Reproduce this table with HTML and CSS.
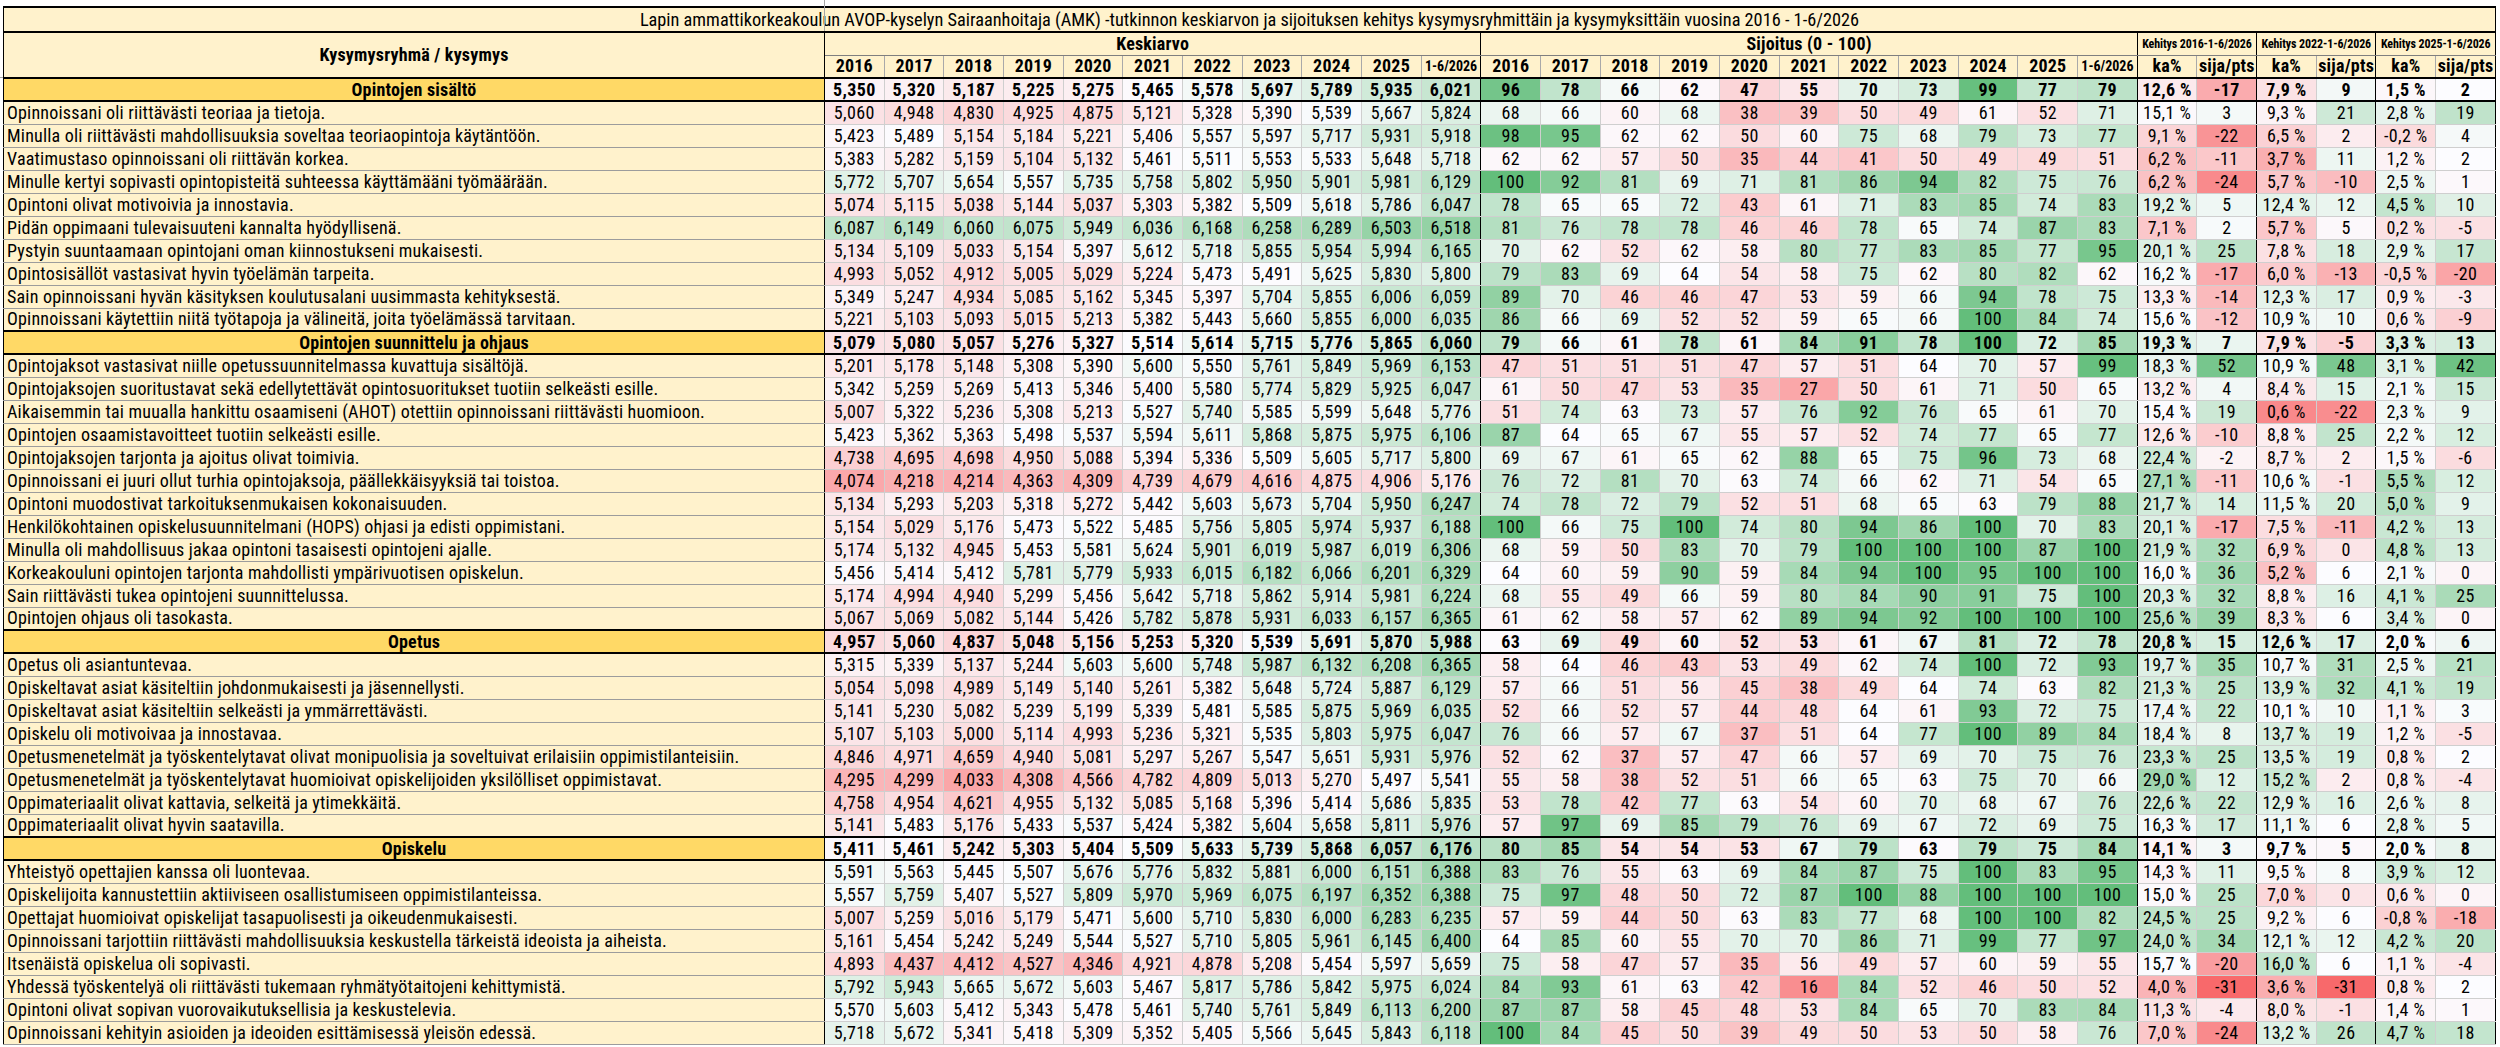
FILE: index.html
```html
<!DOCTYPE html>
<html lang="fi">
<head>
<meta charset="utf-8">
<title>AVOP Sairaanhoitaja (AMK)</title>
<link rel="stylesheet" href="styles.css">
</head>
<body>
<div class="freeze-v"></div>
<div class="freeze-h"></div>
<table class="sheet">
<colgroup><col class="qcol"><col span="28"></colgroup>
<thead>
<tr class="t"><th colspan="29" class="title">Lapin ammattikorkeakoulun AVOP-kyselyn Sairaanhoitaja (AMK) -tutkinnon keskiarvon ja sijoituksen kehitys kysymysryhmittäin ja kysymyksittäin vuosina 2016 - 1-6/2026</th></tr>
<tr class="grp"><th rowspan="2" class="qh br">Kysymysryhmä / kysymys</th><th colspan="11" class="br">Keskiarvo</th><th colspan="11" class="br">Sijoitus (0 - 100)</th><th colspan="2" class="xs br">Kehitys 2016-1-6/2026</th><th colspan="2" class="xs br">Kehitys 2022-1-6/2026</th><th colspan="2" class="xs br">Kehitys 2025-1-6/2026</th></tr>
<tr class="yr"><th>2016</th><th>2017</th><th>2018</th><th>2019</th><th>2020</th><th>2021</th><th>2022</th><th>2023</th><th>2024</th><th>2025</th><th class="sm br">1-6/2026</th><th>2016</th><th>2017</th><th>2018</th><th>2019</th><th>2020</th><th>2021</th><th>2022</th><th>2023</th><th>2024</th><th>2025</th><th class="sm br">1-6/2026</th><th>ka%</th><th class="br">sija/pts</th><th>ka%</th><th class="br">sija/pts</th><th>ka%</th><th class="br">sija/pts</th></tr>
</thead>
<tbody>
<tr class="sec"><th>Opintojen sisältö</th><td>5,350</td><td>5,320</td><td>5,187</td><td>5,225</td><td>5,275</td><td>5,465</td><td>5,578</td><td>5,697</td><td>5,789</td><td>5,935</td><td>6,021</td><td>96</td><td>78</td><td>66</td><td>62</td><td>47</td><td>55</td><td>70</td><td>73</td><td>99</td><td>77</td><td>79</td><td>12,6&nbsp;%</td><td>-17</td><td>7,9&nbsp;%</td><td>9</td><td>1,5&nbsp;%</td><td>2</td></tr>
<tr><th class="q">Opinnoissani oli riittävästi teoriaa ja tietoja.</th><td>5,060</td><td>4,948</td><td>4,830</td><td>4,925</td><td>4,875</td><td>5,121</td><td>5,328</td><td>5,390</td><td>5,539</td><td>5,667</td><td>5,824</td><td>68</td><td>66</td><td>60</td><td>68</td><td>38</td><td>39</td><td>50</td><td>49</td><td>61</td><td>52</td><td>71</td><td>15,1&nbsp;%</td><td>3</td><td>9,3&nbsp;%</td><td>21</td><td>2,8&nbsp;%</td><td>19</td></tr>
<tr><th class="q">Minulla oli riittävästi mahdollisuuksia soveltaa teoriaopintoja käytäntöön.</th><td>5,423</td><td>5,489</td><td>5,154</td><td>5,184</td><td>5,221</td><td>5,406</td><td>5,557</td><td>5,597</td><td>5,717</td><td>5,931</td><td>5,918</td><td>98</td><td>95</td><td>62</td><td>62</td><td>50</td><td>60</td><td>75</td><td>68</td><td>79</td><td>73</td><td>77</td><td>9,1&nbsp;%</td><td>-22</td><td>6,5&nbsp;%</td><td>2</td><td>-0,2&nbsp;%</td><td>4</td></tr>
<tr><th class="q">Vaatimustaso opinnoissani oli riittävän korkea.</th><td>5,383</td><td>5,282</td><td>5,159</td><td>5,104</td><td>5,132</td><td>5,461</td><td>5,511</td><td>5,553</td><td>5,533</td><td>5,648</td><td>5,718</td><td>62</td><td>62</td><td>57</td><td>50</td><td>35</td><td>44</td><td>41</td><td>50</td><td>49</td><td>49</td><td>51</td><td>6,2&nbsp;%</td><td>-11</td><td>3,7&nbsp;%</td><td>11</td><td>1,2&nbsp;%</td><td>2</td></tr>
<tr><th class="q">Minulle kertyi sopivasti opintopisteitä suhteessa käyttämääni työmäärään.</th><td>5,772</td><td>5,707</td><td>5,654</td><td>5,557</td><td>5,735</td><td>5,758</td><td>5,802</td><td>5,950</td><td>5,901</td><td>5,981</td><td>6,129</td><td>100</td><td>92</td><td>81</td><td>69</td><td>71</td><td>81</td><td>86</td><td>94</td><td>82</td><td>75</td><td>76</td><td>6,2&nbsp;%</td><td>-24</td><td>5,7&nbsp;%</td><td>-10</td><td>2,5&nbsp;%</td><td>1</td></tr>
<tr><th class="q">Opintoni olivat motivoivia ja innostavia.</th><td>5,074</td><td>5,115</td><td>5,038</td><td>5,144</td><td>5,037</td><td>5,303</td><td>5,382</td><td>5,509</td><td>5,618</td><td>5,786</td><td>6,047</td><td>78</td><td>65</td><td>65</td><td>72</td><td>43</td><td>61</td><td>71</td><td>83</td><td>85</td><td>74</td><td>83</td><td>19,2&nbsp;%</td><td>5</td><td>12,4&nbsp;%</td><td>12</td><td>4,5&nbsp;%</td><td>10</td></tr>
<tr><th class="q">Pidän oppimaani tulevaisuuteni kannalta hyödyllisenä.</th><td>6,087</td><td>6,149</td><td>6,060</td><td>6,075</td><td>5,949</td><td>6,036</td><td>6,168</td><td>6,258</td><td>6,289</td><td>6,503</td><td>6,518</td><td>81</td><td>76</td><td>78</td><td>78</td><td>46</td><td>46</td><td>78</td><td>65</td><td>74</td><td>87</td><td>83</td><td>7,1&nbsp;%</td><td>2</td><td>5,7&nbsp;%</td><td>5</td><td>0,2&nbsp;%</td><td>-5</td></tr>
<tr><th class="q">Pystyin suuntaamaan opintojani oman kiinnostukseni mukaisesti.</th><td>5,134</td><td>5,109</td><td>5,033</td><td>5,154</td><td>5,397</td><td>5,612</td><td>5,718</td><td>5,855</td><td>5,954</td><td>5,994</td><td>6,165</td><td>70</td><td>62</td><td>52</td><td>62</td><td>58</td><td>80</td><td>77</td><td>83</td><td>85</td><td>77</td><td>95</td><td>20,1&nbsp;%</td><td>25</td><td>7,8&nbsp;%</td><td>18</td><td>2,9&nbsp;%</td><td>17</td></tr>
<tr><th class="q">Opintosisällöt vastasivat hyvin työelämän tarpeita.</th><td>4,993</td><td>5,052</td><td>4,912</td><td>5,005</td><td>5,029</td><td>5,224</td><td>5,473</td><td>5,491</td><td>5,625</td><td>5,830</td><td>5,800</td><td>79</td><td>83</td><td>69</td><td>64</td><td>54</td><td>58</td><td>75</td><td>62</td><td>80</td><td>82</td><td>62</td><td>16,2&nbsp;%</td><td>-17</td><td>6,0&nbsp;%</td><td>-13</td><td>-0,5&nbsp;%</td><td>-20</td></tr>
<tr><th class="q">Sain opinnoissani hyvän käsityksen koulutusalani uusimmasta kehityksestä.</th><td>5,349</td><td>5,247</td><td>4,934</td><td>5,085</td><td>5,162</td><td>5,345</td><td>5,397</td><td>5,704</td><td>5,855</td><td>6,006</td><td>6,059</td><td>89</td><td>70</td><td>46</td><td>46</td><td>47</td><td>53</td><td>59</td><td>66</td><td>94</td><td>78</td><td>75</td><td>13,3&nbsp;%</td><td>-14</td><td>12,3&nbsp;%</td><td>17</td><td>0,9&nbsp;%</td><td>-3</td></tr>
<tr><th class="q">Opinnoissani käytettiin niitä työtapoja ja välineitä, joita työelämässä tarvitaan.</th><td>5,221</td><td>5,103</td><td>5,093</td><td>5,015</td><td>5,213</td><td>5,382</td><td>5,443</td><td>5,660</td><td>5,855</td><td>6,000</td><td>6,035</td><td>86</td><td>66</td><td>69</td><td>52</td><td>52</td><td>59</td><td>65</td><td>66</td><td>100</td><td>84</td><td>74</td><td>15,6&nbsp;%</td><td>-12</td><td>10,9&nbsp;%</td><td>10</td><td>0,6&nbsp;%</td><td>-9</td></tr>
<tr class="sec"><th>Opintojen suunnittelu ja ohjaus</th><td>5,079</td><td>5,080</td><td>5,057</td><td>5,276</td><td>5,327</td><td>5,514</td><td>5,614</td><td>5,715</td><td>5,776</td><td>5,865</td><td>6,060</td><td>79</td><td>66</td><td>61</td><td>78</td><td>61</td><td>84</td><td>91</td><td>78</td><td>100</td><td>72</td><td>85</td><td>19,3&nbsp;%</td><td>7</td><td>7,9&nbsp;%</td><td>-5</td><td>3,3&nbsp;%</td><td>13</td></tr>
<tr><th class="q">Opintojaksot vastasivat niille opetussuunnitelmassa kuvattuja sisältöjä.</th><td>5,201</td><td>5,178</td><td>5,148</td><td>5,308</td><td>5,390</td><td>5,600</td><td>5,550</td><td>5,761</td><td>5,849</td><td>5,969</td><td>6,153</td><td>47</td><td>51</td><td>51</td><td>51</td><td>47</td><td>57</td><td>51</td><td>64</td><td>70</td><td>57</td><td>99</td><td>18,3&nbsp;%</td><td>52</td><td>10,9&nbsp;%</td><td>48</td><td>3,1&nbsp;%</td><td>42</td></tr>
<tr><th class="q">Opintojaksojen suoritustavat sekä edellytettävät opintosuoritukset tuotiin selkeästi esille.</th><td>5,342</td><td>5,259</td><td>5,269</td><td>5,413</td><td>5,346</td><td>5,400</td><td>5,580</td><td>5,774</td><td>5,829</td><td>5,925</td><td>6,047</td><td>61</td><td>50</td><td>47</td><td>53</td><td>35</td><td>27</td><td>50</td><td>61</td><td>71</td><td>50</td><td>65</td><td>13,2&nbsp;%</td><td>4</td><td>8,4&nbsp;%</td><td>15</td><td>2,1&nbsp;%</td><td>15</td></tr>
<tr><th class="q">Aikaisemmin tai muualla hankittu osaamiseni (AHOT) otettiin opinnoissani riittävästi huomioon.</th><td>5,007</td><td>5,322</td><td>5,236</td><td>5,308</td><td>5,213</td><td>5,527</td><td>5,740</td><td>5,585</td><td>5,599</td><td>5,648</td><td>5,776</td><td>51</td><td>74</td><td>63</td><td>73</td><td>57</td><td>76</td><td>92</td><td>76</td><td>65</td><td>61</td><td>70</td><td>15,4&nbsp;%</td><td>19</td><td>0,6&nbsp;%</td><td>-22</td><td>2,3&nbsp;%</td><td>9</td></tr>
<tr><th class="q">Opintojen osaamistavoitteet tuotiin selkeästi esille.</th><td>5,423</td><td>5,362</td><td>5,363</td><td>5,498</td><td>5,537</td><td>5,594</td><td>5,611</td><td>5,868</td><td>5,875</td><td>5,975</td><td>6,106</td><td>87</td><td>64</td><td>65</td><td>67</td><td>55</td><td>57</td><td>52</td><td>74</td><td>77</td><td>65</td><td>77</td><td>12,6&nbsp;%</td><td>-10</td><td>8,8&nbsp;%</td><td>25</td><td>2,2&nbsp;%</td><td>12</td></tr>
<tr><th class="q">Opintojaksojen tarjonta ja ajoitus olivat toimivia.</th><td>4,738</td><td>4,695</td><td>4,698</td><td>4,950</td><td>5,088</td><td>5,394</td><td>5,336</td><td>5,509</td><td>5,605</td><td>5,717</td><td>5,800</td><td>69</td><td>67</td><td>61</td><td>65</td><td>62</td><td>88</td><td>65</td><td>75</td><td>96</td><td>73</td><td>68</td><td>22,4&nbsp;%</td><td>-2</td><td>8,7&nbsp;%</td><td>2</td><td>1,5&nbsp;%</td><td>-6</td></tr>
<tr><th class="q">Opinnoissani ei juuri ollut turhia opintojaksoja, päällekkäisyyksiä tai toistoa.</th><td>4,074</td><td>4,218</td><td>4,214</td><td>4,363</td><td>4,309</td><td>4,739</td><td>4,679</td><td>4,616</td><td>4,875</td><td>4,906</td><td>5,176</td><td>76</td><td>72</td><td>81</td><td>70</td><td>63</td><td>74</td><td>66</td><td>62</td><td>71</td><td>54</td><td>65</td><td>27,1&nbsp;%</td><td>-11</td><td>10,6&nbsp;%</td><td>-1</td><td>5,5&nbsp;%</td><td>12</td></tr>
<tr><th class="q">Opintoni muodostivat tarkoituksenmukaisen kokonaisuuden.</th><td>5,134</td><td>5,293</td><td>5,203</td><td>5,318</td><td>5,272</td><td>5,442</td><td>5,603</td><td>5,673</td><td>5,704</td><td>5,950</td><td>6,247</td><td>74</td><td>78</td><td>72</td><td>79</td><td>52</td><td>51</td><td>68</td><td>65</td><td>63</td><td>79</td><td>88</td><td>21,7&nbsp;%</td><td>14</td><td>11,5&nbsp;%</td><td>20</td><td>5,0&nbsp;%</td><td>9</td></tr>
<tr><th class="q">Henkilökohtainen opiskelusuunnitelmani (HOPS) ohjasi ja edisti oppimistani.</th><td>5,154</td><td>5,029</td><td>5,176</td><td>5,473</td><td>5,522</td><td>5,485</td><td>5,756</td><td>5,805</td><td>5,974</td><td>5,937</td><td>6,188</td><td>100</td><td>66</td><td>75</td><td>100</td><td>74</td><td>80</td><td>94</td><td>86</td><td>100</td><td>70</td><td>83</td><td>20,1&nbsp;%</td><td>-17</td><td>7,5&nbsp;%</td><td>-11</td><td>4,2&nbsp;%</td><td>13</td></tr>
<tr><th class="q">Minulla oli mahdollisuus jakaa opintoni tasaisesti opintojeni ajalle.</th><td>5,174</td><td>5,132</td><td>4,945</td><td>5,453</td><td>5,581</td><td>5,624</td><td>5,901</td><td>6,019</td><td>5,987</td><td>6,019</td><td>6,306</td><td>68</td><td>59</td><td>50</td><td>83</td><td>70</td><td>79</td><td>100</td><td>100</td><td>100</td><td>87</td><td>100</td><td>21,9&nbsp;%</td><td>32</td><td>6,9&nbsp;%</td><td>0</td><td>4,8&nbsp;%</td><td>13</td></tr>
<tr><th class="q">Korkeakouluni opintojen tarjonta mahdollisti ympärivuotisen opiskelun.</th><td>5,456</td><td>5,414</td><td>5,412</td><td>5,781</td><td>5,779</td><td>5,933</td><td>6,015</td><td>6,182</td><td>6,066</td><td>6,201</td><td>6,329</td><td>64</td><td>60</td><td>59</td><td>90</td><td>59</td><td>84</td><td>94</td><td>100</td><td>95</td><td>100</td><td>100</td><td>16,0&nbsp;%</td><td>36</td><td>5,2&nbsp;%</td><td>6</td><td>2,1&nbsp;%</td><td>0</td></tr>
<tr><th class="q">Sain riittävästi tukea opintojeni suunnittelussa.</th><td>5,174</td><td>4,994</td><td>4,940</td><td>5,299</td><td>5,456</td><td>5,642</td><td>5,718</td><td>5,862</td><td>5,914</td><td>5,981</td><td>6,224</td><td>68</td><td>55</td><td>49</td><td>66</td><td>59</td><td>80</td><td>84</td><td>90</td><td>91</td><td>75</td><td>100</td><td>20,3&nbsp;%</td><td>32</td><td>8,8&nbsp;%</td><td>16</td><td>4,1&nbsp;%</td><td>25</td></tr>
<tr><th class="q">Opintojen ohjaus oli tasokasta.</th><td>5,067</td><td>5,069</td><td>5,082</td><td>5,144</td><td>5,426</td><td>5,782</td><td>5,878</td><td>5,931</td><td>6,033</td><td>6,157</td><td>6,365</td><td>61</td><td>62</td><td>58</td><td>57</td><td>62</td><td>89</td><td>94</td><td>92</td><td>100</td><td>100</td><td>100</td><td>25,6&nbsp;%</td><td>39</td><td>8,3&nbsp;%</td><td>6</td><td>3,4&nbsp;%</td><td>0</td></tr>
<tr class="sec"><th>Opetus</th><td>4,957</td><td>5,060</td><td>4,837</td><td>5,048</td><td>5,156</td><td>5,253</td><td>5,320</td><td>5,539</td><td>5,691</td><td>5,870</td><td>5,988</td><td>63</td><td>69</td><td>49</td><td>60</td><td>52</td><td>53</td><td>61</td><td>67</td><td>81</td><td>72</td><td>78</td><td>20,8&nbsp;%</td><td>15</td><td>12,6&nbsp;%</td><td>17</td><td>2,0&nbsp;%</td><td>6</td></tr>
<tr><th class="q">Opetus oli asiantuntevaa.</th><td>5,315</td><td>5,339</td><td>5,137</td><td>5,244</td><td>5,603</td><td>5,600</td><td>5,748</td><td>5,987</td><td>6,132</td><td>6,208</td><td>6,365</td><td>58</td><td>64</td><td>46</td><td>43</td><td>53</td><td>49</td><td>62</td><td>74</td><td>100</td><td>72</td><td>93</td><td>19,7&nbsp;%</td><td>35</td><td>10,7&nbsp;%</td><td>31</td><td>2,5&nbsp;%</td><td>21</td></tr>
<tr><th class="q">Opiskeltavat asiat käsiteltiin johdonmukaisesti ja jäsennellysti.</th><td>5,054</td><td>5,098</td><td>4,989</td><td>5,149</td><td>5,140</td><td>5,261</td><td>5,382</td><td>5,648</td><td>5,724</td><td>5,887</td><td>6,129</td><td>57</td><td>66</td><td>51</td><td>56</td><td>45</td><td>38</td><td>49</td><td>64</td><td>74</td><td>63</td><td>82</td><td>21,3&nbsp;%</td><td>25</td><td>13,9&nbsp;%</td><td>32</td><td>4,1&nbsp;%</td><td>19</td></tr>
<tr><th class="q">Opiskeltavat asiat käsiteltiin selkeästi ja ymmärrettävästi.</th><td>5,141</td><td>5,230</td><td>5,082</td><td>5,239</td><td>5,199</td><td>5,339</td><td>5,481</td><td>5,585</td><td>5,875</td><td>5,969</td><td>6,035</td><td>52</td><td>66</td><td>52</td><td>57</td><td>44</td><td>48</td><td>64</td><td>61</td><td>93</td><td>72</td><td>75</td><td>17,4&nbsp;%</td><td>22</td><td>10,1&nbsp;%</td><td>10</td><td>1,1&nbsp;%</td><td>3</td></tr>
<tr><th class="q">Opiskelu oli motivoivaa ja innostavaa.</th><td>5,107</td><td>5,103</td><td>5,000</td><td>5,114</td><td>4,993</td><td>5,236</td><td>5,321</td><td>5,535</td><td>5,803</td><td>5,975</td><td>6,047</td><td>76</td><td>66</td><td>57</td><td>67</td><td>37</td><td>51</td><td>64</td><td>77</td><td>100</td><td>89</td><td>84</td><td>18,4&nbsp;%</td><td>8</td><td>13,7&nbsp;%</td><td>19</td><td>1,2&nbsp;%</td><td>-5</td></tr>
<tr><th class="q">Opetusmenetelmät ja työskentelytavat olivat monipuolisia ja soveltuivat erilaisiin oppimistilanteisiin.</th><td>4,846</td><td>4,971</td><td>4,659</td><td>4,940</td><td>5,081</td><td>5,297</td><td>5,267</td><td>5,547</td><td>5,651</td><td>5,931</td><td>5,976</td><td>52</td><td>62</td><td>37</td><td>57</td><td>47</td><td>66</td><td>57</td><td>69</td><td>70</td><td>75</td><td>76</td><td>23,3&nbsp;%</td><td>25</td><td>13,5&nbsp;%</td><td>19</td><td>0,8&nbsp;%</td><td>2</td></tr>
<tr><th class="q">Opetusmenetelmät ja työskentelytavat huomioivat opiskelijoiden yksilölliset oppimistavat.</th><td>4,295</td><td>4,299</td><td>4,033</td><td>4,308</td><td>4,566</td><td>4,782</td><td>4,809</td><td>5,013</td><td>5,270</td><td>5,497</td><td>5,541</td><td>55</td><td>58</td><td>38</td><td>52</td><td>51</td><td>66</td><td>65</td><td>63</td><td>75</td><td>70</td><td>66</td><td>29,0&nbsp;%</td><td>12</td><td>15,2&nbsp;%</td><td>2</td><td>0,8&nbsp;%</td><td>-4</td></tr>
<tr><th class="q">Oppimateriaalit olivat kattavia, selkeitä ja ytimekkäitä.</th><td>4,758</td><td>4,954</td><td>4,621</td><td>4,955</td><td>5,132</td><td>5,085</td><td>5,168</td><td>5,396</td><td>5,414</td><td>5,686</td><td>5,835</td><td>53</td><td>78</td><td>42</td><td>77</td><td>63</td><td>54</td><td>60</td><td>70</td><td>68</td><td>67</td><td>76</td><td>22,6&nbsp;%</td><td>22</td><td>12,9&nbsp;%</td><td>16</td><td>2,6&nbsp;%</td><td>8</td></tr>
<tr><th class="q">Oppimateriaalit olivat hyvin saatavilla.</th><td>5,141</td><td>5,483</td><td>5,176</td><td>5,433</td><td>5,537</td><td>5,424</td><td>5,382</td><td>5,604</td><td>5,658</td><td>5,811</td><td>5,976</td><td>57</td><td>97</td><td>69</td><td>85</td><td>79</td><td>76</td><td>69</td><td>67</td><td>72</td><td>69</td><td>75</td><td>16,3&nbsp;%</td><td>17</td><td>11,1&nbsp;%</td><td>6</td><td>2,8&nbsp;%</td><td>5</td></tr>
<tr class="sec"><th>Opiskelu</th><td>5,411</td><td>5,461</td><td>5,242</td><td>5,303</td><td>5,404</td><td>5,509</td><td>5,633</td><td>5,739</td><td>5,868</td><td>6,057</td><td>6,176</td><td>80</td><td>85</td><td>54</td><td>54</td><td>53</td><td>67</td><td>79</td><td>63</td><td>79</td><td>75</td><td>84</td><td>14,1&nbsp;%</td><td>3</td><td>9,7&nbsp;%</td><td>5</td><td>2,0&nbsp;%</td><td>8</td></tr>
<tr><th class="q">Yhteistyö opettajien kanssa oli luontevaa.</th><td>5,591</td><td>5,563</td><td>5,445</td><td>5,507</td><td>5,676</td><td>5,776</td><td>5,832</td><td>5,881</td><td>6,000</td><td>6,151</td><td>6,388</td><td>83</td><td>76</td><td>55</td><td>63</td><td>69</td><td>84</td><td>87</td><td>75</td><td>100</td><td>83</td><td>95</td><td>14,3&nbsp;%</td><td>11</td><td>9,5&nbsp;%</td><td>8</td><td>3,9&nbsp;%</td><td>12</td></tr>
<tr><th class="q">Opiskelijoita kannustettiin aktiiviseen osallistumiseen oppimistilanteissa.</th><td>5,557</td><td>5,759</td><td>5,407</td><td>5,527</td><td>5,809</td><td>5,970</td><td>5,969</td><td>6,075</td><td>6,197</td><td>6,352</td><td>6,388</td><td>75</td><td>97</td><td>48</td><td>50</td><td>72</td><td>87</td><td>100</td><td>88</td><td>100</td><td>100</td><td>100</td><td>15,0&nbsp;%</td><td>25</td><td>7,0&nbsp;%</td><td>0</td><td>0,6&nbsp;%</td><td>0</td></tr>
<tr><th class="q">Opettajat huomioivat opiskelijat tasapuolisesti ja oikeudenmukaisesti.</th><td>5,007</td><td>5,259</td><td>5,016</td><td>5,179</td><td>5,471</td><td>5,600</td><td>5,710</td><td>5,830</td><td>6,000</td><td>6,283</td><td>6,235</td><td>57</td><td>59</td><td>44</td><td>50</td><td>63</td><td>83</td><td>77</td><td>68</td><td>100</td><td>100</td><td>82</td><td>24,5&nbsp;%</td><td>25</td><td>9,2&nbsp;%</td><td>6</td><td>-0,8&nbsp;%</td><td>-18</td></tr>
<tr><th class="q">Opinnoissani tarjottiin riittävästi mahdollisuuksia keskustella tärkeistä ideoista ja aiheista.</th><td>5,161</td><td>5,454</td><td>5,242</td><td>5,249</td><td>5,544</td><td>5,527</td><td>5,710</td><td>5,805</td><td>5,961</td><td>6,145</td><td>6,400</td><td>64</td><td>85</td><td>60</td><td>55</td><td>70</td><td>70</td><td>86</td><td>71</td><td>99</td><td>77</td><td>97</td><td>24,0&nbsp;%</td><td>34</td><td>12,1&nbsp;%</td><td>12</td><td>4,2&nbsp;%</td><td>20</td></tr>
<tr><th class="q">Itsenäistä opiskelua oli sopivasti.</th><td>4,893</td><td>4,437</td><td>4,412</td><td>4,527</td><td>4,346</td><td>4,921</td><td>4,878</td><td>5,208</td><td>5,454</td><td>5,597</td><td>5,659</td><td>75</td><td>58</td><td>47</td><td>57</td><td>35</td><td>56</td><td>49</td><td>57</td><td>60</td><td>59</td><td>55</td><td>15,7&nbsp;%</td><td>-20</td><td>16,0&nbsp;%</td><td>6</td><td>1,1&nbsp;%</td><td>-4</td></tr>
<tr><th class="q">Yhdessä työskentelyä oli riittävästi tukemaan ryhmätyötaitojeni kehittymistä.</th><td>5,792</td><td>5,943</td><td>5,665</td><td>5,672</td><td>5,603</td><td>5,467</td><td>5,817</td><td>5,786</td><td>5,842</td><td>5,975</td><td>6,024</td><td>84</td><td>93</td><td>61</td><td>63</td><td>42</td><td>16</td><td>84</td><td>52</td><td>46</td><td>50</td><td>52</td><td>4,0&nbsp;%</td><td>-31</td><td>3,6&nbsp;%</td><td>-31</td><td>0,8&nbsp;%</td><td>2</td></tr>
<tr><th class="q">Opintoni olivat sopivan vuorovaikutuksellisia ja keskustelevia.</th><td>5,570</td><td>5,603</td><td>5,412</td><td>5,343</td><td>5,478</td><td>5,461</td><td>5,740</td><td>5,761</td><td>5,849</td><td>6,113</td><td>6,200</td><td>87</td><td>87</td><td>58</td><td>45</td><td>48</td><td>53</td><td>84</td><td>65</td><td>70</td><td>83</td><td>84</td><td>11,3&nbsp;%</td><td>-4</td><td>8,0&nbsp;%</td><td>-1</td><td>1,4&nbsp;%</td><td>1</td></tr>
<tr><th class="q">Opinnoissani kehityin asioiden ja ideoiden esittämisessä yleisön edessä.</th><td>5,718</td><td>5,672</td><td>5,341</td><td>5,418</td><td>5,309</td><td>5,352</td><td>5,405</td><td>5,566</td><td>5,645</td><td>5,843</td><td>6,118</td><td>100</td><td>84</td><td>45</td><td>50</td><td>39</td><td>49</td><td>50</td><td>53</td><td>50</td><td>58</td><td>76</td><td>7,0&nbsp;%</td><td>-24</td><td>13,2&nbsp;%</td><td>26</td><td>4,7&nbsp;%</td><td>18</td></tr>
</tbody>
</table>
<script src="script.js"></script>
</body>
</html>
```

FILE: styles.css
```css
* { box-sizing: border-box; }
html, body { margin: 0; padding: 0; background: #ffffff; }
body {
  position: relative;
  padding: 6px 0 0 3px;
  font-family: "Liberation Sans Narrow", "Arial Narrow", "Roboto Condensed", "DejaVu Sans Condensed", sans-serif;
  color: #000;
  overflow: hidden;
}
.freeze-v {
  position: absolute;
  left: 824px;
  top: 0;
  width: 1px;
  height: 31px;
  background: #a6a6a6;
  z-index: 2;
}
.freeze-h {
  position: absolute;
  left: 0;
  top: 77px;
  width: 3px;
  height: 1px;
  background: #a6a6a6;
}
.sheet {
  border-collapse: collapse;
  table-layout: fixed;
  width: 2493px;
  font-size: 18px;
  letter-spacing: 0.2px;
}
.sheet col.qcol { width: 821px; }
.sheet tr { height: 23px; }
.sheet th, .sheet td {
  border: 1px solid #cfcfcf;
  padding: 0 1px;
  text-align: center;
  vertical-align: middle;
  white-space: nowrap;
  overflow: hidden;
  font-weight: normal;
  line-height: 20px;
}
.sheet td { background: #fcfcff; letter-spacing: 0.4px; }
.sheet thead th {
  background: #fff2cc;
  font-weight: bold;
  border-color: #a9a9a9;
}
.sheet thead tr.t { height: 25px; }
.sheet th.title {
  font-weight: normal;
  font-size: 18.3px;
  letter-spacing: 0;
  border: 1px solid #000;
  border-top: 2px solid #000;
  border-bottom: 2px solid #000;
}
.sheet th.qh { border-left: 1px solid #000; }
.sheet th.sm { font-size: 14px; letter-spacing: 0; }
.sheet th.xs { font-size: 12px; letter-spacing: -0.1px; padding: 0; }
.sheet thead .br { border-right: 1px solid #000; }
.sheet tr.yr th { border-bottom: 2px solid #000; }
.sheet tr.grp th { border-bottom-color: #7f7f7f; }

.sheet tbody th.q {
  text-align: left;
  padding-left: 3px;
  background: #fff2cc;
  font-weight: normal;
  border-color: #9c9c9c;
  border-left: 1px solid #000;
  border-right: 1px solid #000;
}
.sheet tbody tr.sec th {
  background: #ffd966;
  font-weight: bold;
  text-align: center;
  border-left: 1px solid #000;
  border-right: 1px solid #000;
}
.sheet tbody tr.sec td { font-weight: bold; }
.sheet tbody tr.sec > * {
  border-top: 2px solid #000;
  border-bottom: 2px solid #000;
}
.sheet tbody td:nth-child(12),
.sheet tbody td:nth-child(23),
.sheet tbody td:nth-child(25),
.sheet tbody td:nth-child(27),
.sheet tbody td:nth-child(29) {
  border-right: 1px solid #000;
}
```

FILE: script.js
```js
(function () {
  var WHITE = [252, 252, 255];
  var RED = [248, 105, 107];
  var GREEN = [99, 190, 123];
  // [min, mid, max] of the colour scale for each data column
  var K = [3.0, 5.5, 7.0];
  var S = [0, 64, 100];
  var scales = [K, K, K, K, K, K, K, K, K, K, K,
    S, S, S, S, S, S, S, S, S, S, S,
    [-8, 15.5, 38], [-31, 0, 60],
    [-2, 10, 26], [-31, 6, 56],
    [-7, 1.8, 9], [-35, 2, 45]];

  function mix(a, b, t) {
    return 'rgb(' + Math.round(a[0] + (b[0] - a[0]) * t) + ',' +
      Math.round(a[1] + (b[1] - a[1]) * t) + ',' +
      Math.round(a[2] + (b[2] - a[2]) * t) + ')';
  }
  function colour(v, sc) {
    var t;
    if (v < sc[1]) {
      t = Math.min(1, (sc[1] - v) / (sc[1] - sc[0]));
      return mix(WHITE, RED, t);
    }
    t = Math.min(1, (v - sc[1]) / (sc[2] - sc[1]));
    return mix(WHITE, GREEN, t);
  }
  var rows = document.querySelectorAll('.sheet tbody tr');
  rows.forEach(function (tr) {
    var cells = tr.children;
    for (var i = 1; i < cells.length; i++) {
      var txt = cells[i].textContent.replace(/[\s%\u00a0]/g, '').replace(',', '.');
      var v = parseFloat(txt);
      if (!isNaN(v) && scales[i - 1]) {
        cells[i].style.backgroundColor = colour(v, scales[i - 1]);
      }
    }
  });
})();
```
